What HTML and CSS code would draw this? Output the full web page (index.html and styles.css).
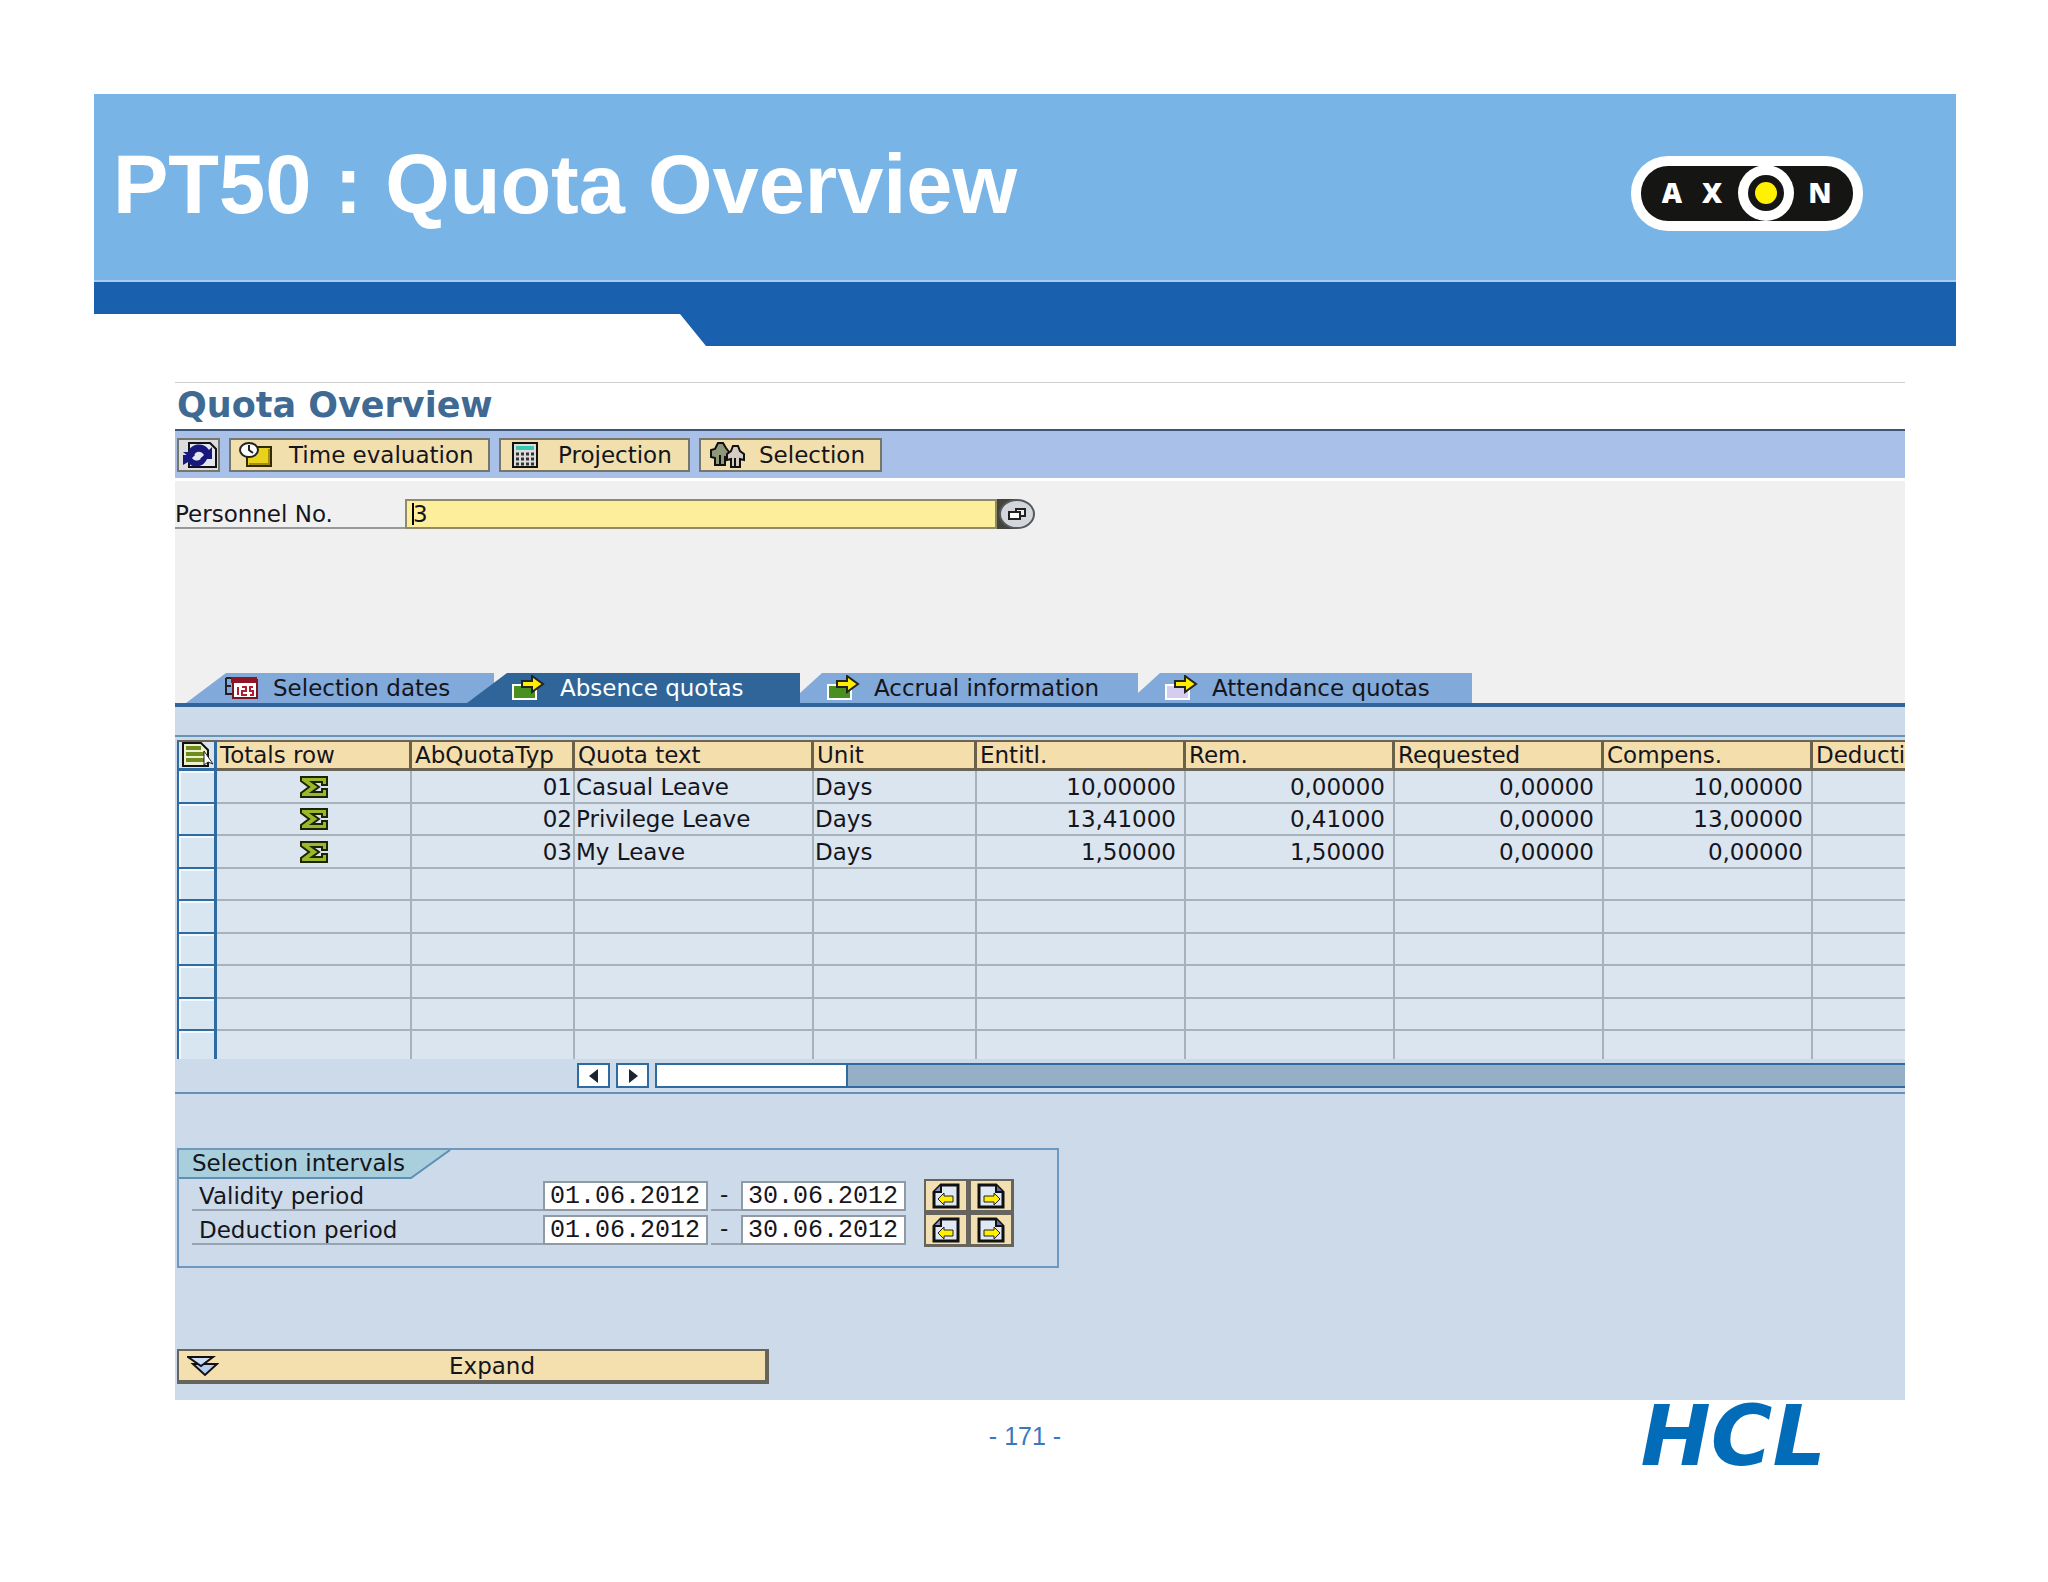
FILE: index.html
```html
<!DOCTYPE html>
<html lang="en">
<head>
    <meta charset="UTF-8">
    <meta name="viewport" content="width=device-width, initial-scale=1.0">
    <title>PT50 : Quota Overview</title>
    <link rel="stylesheet" href="styles.css">
</head>
<body>
    <!-- shared icons -->
    <svg class="sprite" aria-hidden="true">
        <symbol id="sigma" viewBox="0 0 28 22">
            <path d="M1 1H27V9H22V6H12L19 11L12 16H22V13H27V21H1V17L9 11L1 5Z" fill="#9ab82a" stroke="#1c2400" stroke-width="2"/>
        </symbol>
        <symbol id="page-prev" viewBox="0 0 28 26">
            <path d="M9 2H26V24H2V9Z" fill="#dfe8f5" stroke="#111" stroke-width="3"/>
            <path d="M2 9H9V2" fill="#8c90b4" stroke="#111" stroke-width="2"/>
            <path d="M6 16L12 10V13H21V19H12V22Z" fill="#ffee00" stroke="#222" stroke-width="1"/>
        </symbol>
        <symbol id="page-next" viewBox="0 0 28 26">
            <path d="M2 2H19L26 9V24H2Z" fill="#dfe8f5" stroke="#111" stroke-width="3"/>
            <path d="M19 2V9H26" fill="#6a6a96" stroke="#111" stroke-width="2"/>
            <path d="M23 16L17 10V13H7V19H17V22Z" fill="#ffee00" stroke="#222" stroke-width="1"/>
        </symbol>
        <symbol id="arrow-box" viewBox="0 0 34 26">
            <rect x="2" y="10" width="23" height="14" fill="currentColor" stroke="#fff" stroke-width="2"/>
            <path d="M11 6H21V1L32 9L21 17V12H11Z" fill="#ffee00" stroke="#222" stroke-width="2"/>
        </symbol>
    </svg>

    <div class="slide">
        <header class="banner">
            <h1>PT50 : Quota Overview</h1>
            <svg class="axon" viewBox="0 0 232 75" role="img" aria-label="Axon">
                <rect width="232" height="75" rx="37" fill="#fff"/>
                <rect x="10" y="10" width="212" height="55" rx="27" fill="#151514"/>
                <circle cx="135" cy="37" r="28" fill="#fff"/>
                <circle cx="135" cy="37" r="18" fill="#151514"/>
                <circle cx="135" cy="37" r="11" fill="#fff200"/>
                <g class="axon-text">
                    <text x="41" y="47">A</text>
                    <text x="81" y="47">X</text>
                    <text x="189" y="47">N</text>
                </g>
            </svg>
        </header>
        <div class="stripe"></div>

        <main class="sap">
            <h2>Quota Overview</h2>

            <div class="toolbar">
                <button class="refresh" aria-label="Refresh">
                    <svg width="36" height="26" viewBox="0 0 36 26">
                        <path d="M8 1H29L35 7V25H8Z" fill="#e4e6ee" stroke="#111" stroke-width="2"/>
                        <path d="M2 10H7C10 1 23 0 28 8L31 5V17H19L23 13C20 8 14 9 13 14H7Z" fill="#17177e"/>
                        <path d="M31 17H26C22 26 11 27 7 20L2 23V13H14L11 16C14 20 20 19 21 15Z" fill="#17177e"/>
                    </svg>
                </button>
                <button class="time">
                    <svg width="34" height="26" viewBox="0 0 34 26">
                        <rect x="8" y="5" width="24" height="19" fill="#e8d21c" stroke="#332b00" stroke-width="2"/>
                        <path d="M10 22H30V7" fill="none" stroke="#a88a10" stroke-width="2"/>
                        <ellipse cx="10" cy="8" rx="9" ry="7" fill="#fff" stroke="#222" stroke-width="2"/>
                        <path d="M10 3V8L14 11" fill="none" stroke="#222" stroke-width="2"/>
                    </svg>
                    Time evaluation
                </button>
                <button class="projection">
                    <svg width="26" height="26" viewBox="0 0 26 26">
                        <rect x="1" y="1" width="24" height="24" fill="#dcdcdc" stroke="#111" stroke-width="2"/>
                        <rect x="4" y="4" width="18" height="4" fill="#39c9ae"/>
                        <path d="M4 12H22M4 17H22M4 22H22" stroke="#333" stroke-width="3" stroke-dasharray="3 2"/>
                    </svg>
                    Projection
                </button>
                <button class="selection">
                    <svg width="36" height="26" viewBox="0 0 36 26">
                        <path d="M6 7L9 1H14L17 6L20 10V16L16 15V23H6V16L2 15V8Z" fill="#8f9878" stroke="#111" stroke-width="2"/>
                        <path d="M22 9L24 4H29L31 9L35 12V18L31 17V25H22V17L18 18V12Z" fill="#d5cdc4" stroke="#111" stroke-width="2"/>
                        <path d="M11 13V22M26 16V24" stroke="#111" stroke-width="2"/>
                    </svg>
                    Selection
                </button>
            </div>

            <div class="personnel">
                <label for="pernr">Personnel No.</label>
                <input id="pernr" type="text" value="3">
                <button class="match" aria-label="Search help">
                    <svg width="38" height="30" viewBox="0 0 38 30">
                        <rect width="20" height="30" fill="#45443c"/>
                        <ellipse cx="20" cy="15" rx="17" ry="14" fill="#d3d6da" stroke="#55585c" stroke-width="2"/>
                        <rect x="19" y="10" width="9" height="7" fill="#eee" stroke="#222" stroke-width="2"/>
                        <rect x="12" y="13" width="11" height="7" fill="#fff" stroke="#222" stroke-width="2"/>
                    </svg>
                </button>
            </div>

            <nav class="tabs">
                <button class="tab tab-dates">
                    <svg width="34" height="26" viewBox="0 0 34 26">
                        <path d="M2 3H9M2 3V19H9M2 11H7" fill="none" stroke="#222" stroke-width="2"/>
                        <rect x="9" y="5" width="24" height="18" fill="#fff" stroke="#7b1420" stroke-width="2"/>
                        <rect x="7" y="2" width="26" height="6" fill="#8e1524"/>
                        <path d="M14 12V20M18 12H22V16H18V20H23M29 12H26V16H29V20H26" fill="none" stroke="#b0202c" stroke-width="2"/>
                    </svg>
                    Selection dates
                </button>
                <button class="tab tab-absence">
                    <svg class="green" width="34" height="26"><use href="#arrow-box"/></svg>
                    Absence quotas
                </button>
                <button class="tab tab-accrual">
                    <svg class="green" width="34" height="26"><use href="#arrow-box"/></svg>
                    Accrual information
                </button>
                <button class="tab tab-attendance">
                    <svg class="lilac" width="34" height="26"><use href="#arrow-box"/></svg>
                    Attendance quotas
                </button>
            </nav>

            <div class="pane">
                <div class="table-box">
                    <table>
                        <colgroup>
                            <col class="c-sel"><col class="c-totals"><col class="c-typ"><col class="c-text"><col class="c-typ">
                            <col class="c-num"><col class="c-num"><col class="c-num"><col class="c-num"><col>
                        </colgroup>
                        <thead>
                            <tr>
                                <th class="sel" aria-label="Select all">
                                    <svg width="34" height="26" viewBox="0 0 34 26">
                                        <path d="M2 1H20L27 8V24H2Z" fill="#eef0d0" stroke="#111" stroke-width="2"/>
                                        <path d="M5 6H20M5 12H24M5 18H24" stroke="#6f8c1c" stroke-width="4"/>
                                        <path d="M23 9V23L27 20L32 22Z" fill="#fff" stroke="#222" stroke-width="1"/>
                                    </svg>
                                </th>
                                <th>Totals row</th>
                                <th>AbQuotaTyp</th>
                                <th>Quota text</th>
                                <th>Unit</th>
                                <th>Entitl.</th>
                                <th>Rem.</th>
                                <th>Requested</th>
                                <th>Compens.</th>
                                <th>Deducti</th>
                            </tr>
                        </thead>
                        <tbody>
                            <tr>
                                <td class="sel"></td>
                                <td class="sum"><svg width="28" height="22"><use href="#sigma"/></svg></td>
                                <td class="typ">01</td><td>Casual Leave</td><td>Days</td>
                                <td class="num">10,00000</td><td class="num">0,00000</td><td class="num">0,00000</td><td class="num">10,00000</td><td></td>
                            </tr>
                            <tr>
                                <td class="sel"></td>
                                <td class="sum"><svg width="28" height="22"><use href="#sigma"/></svg></td>
                                <td class="typ">02</td><td>Privilege Leave</td><td>Days</td>
                                <td class="num">13,41000</td><td class="num">0,41000</td><td class="num">0,00000</td><td class="num">13,00000</td><td></td>
                            </tr>
                            <tr>
                                <td class="sel"></td>
                                <td class="sum"><svg width="28" height="22"><use href="#sigma"/></svg></td>
                                <td class="typ">03</td><td>My Leave</td><td>Days</td>
                                <td class="num">1,50000</td><td class="num">1,50000</td><td class="num">0,00000</td><td class="num">0,00000</td><td></td>
                            </tr>
                            <tr><td class="sel"></td><td></td><td></td><td></td><td></td><td></td><td></td><td></td><td></td><td></td></tr>
                            <tr><td class="sel"></td><td></td><td></td><td></td><td></td><td></td><td></td><td></td><td></td><td></td></tr>
                            <tr><td class="sel"></td><td></td><td></td><td></td><td></td><td></td><td></td><td></td><td></td><td></td></tr>
                            <tr><td class="sel"></td><td></td><td></td><td></td><td></td><td></td><td></td><td></td><td></td><td></td></tr>
                            <tr><td class="sel"></td><td></td><td></td><td></td><td></td><td></td><td></td><td></td><td></td><td></td></tr>
                            <tr class="last"><td class="sel"></td><td></td><td></td><td></td><td></td><td></td><td></td><td></td><td></td><td></td></tr>
                        </tbody>
                    </table>
                    <div class="scroll">
                        <button aria-label="Scroll left"><svg width="12" height="14" viewBox="0 0 12 14"><path d="M10 0V14L1 7Z" fill="#1d2233"/></svg></button>
                        <button aria-label="Scroll right"><svg width="12" height="14" viewBox="0 0 12 14"><path d="M2 0V14L11 7Z" fill="#1d2233"/></svg></button>
                        <div class="track"><div class="thumb"></div></div>
                    </div>
                </div>

                <section class="intervals">
                    <h3>
                        <svg width="275" height="30" viewBox="0 0 275 30">
                            <path d="M0 0H271L232 28H0Z" fill="#aacfdc"/>
                            <path d="M271 0L232 28H0" fill="none" stroke="#5f8fb5" stroke-width="2"/>
                        </svg>
                        <span>Selection intervals</span>
                    </h3>
                    <div class="period">
                        <label for="valid-from">Validity period</label>
                        <input id="valid-from" type="text" value="01.06.2012">
                        <span class="dash">-</span>
                        <input type="text" value="30.06.2012" aria-label="Validity period to">
                        <div class="pager">
                            <button aria-label="Previous"><svg width="28" height="26"><use href="#page-prev"/></svg></button>
                            <button aria-label="Next"><svg width="28" height="26"><use href="#page-next"/></svg></button>
                        </div>
                    </div>
                    <div class="period">
                        <label for="deduct-from">Deduction period</label>
                        <input id="deduct-from" type="text" value="01.06.2012">
                        <span class="dash">-</span>
                        <input type="text" value="30.06.2012" aria-label="Deduction period to">
                        <div class="pager">
                            <button aria-label="Previous"><svg width="28" height="26"><use href="#page-prev"/></svg></button>
                            <button aria-label="Next"><svg width="28" height="26"><use href="#page-next"/></svg></button>
                        </div>
                    </div>
                </section>

                <button class="expand">
                    <svg width="32" height="22" viewBox="0 0 32 22">
                        <path d="M6 9H30L18 20Z" fill="#b5cdf2" stroke="#111" stroke-width="2"/>
                        <path d="M1 2H26L14 11Z" fill="#c9dcf8" stroke="#111" stroke-width="2"/>
                    </svg>
                    <span>Expand</span>
                </button>
            </div>
        </main>

        <footer>
            <span class="page-no">- 171 -</span>
            <span class="hcl">HCL</span>
        </footer>
    </div>
</body>
</html>
```

FILE: styles.css
```css
* {
    box-sizing: border-box;
}

body {
    margin: 0;
    background-color: #fff;
    font-family: "DejaVu Sans", Verdana, sans-serif;
    font-size: 23px;
    line-height: 28px;
    color: #15151c;
}

button, input {
    font: inherit;
    color: inherit;
    margin: 0;
    padding: 0;
    border: none;
    border-radius: 0;
}

svg {
    display: block;
    flex: none;
}

.sprite {
    position: absolute;
    width: 0;
    height: 0;
}

.slide {
    padding: 94px 92px 0 94px;
}

/* Banner */
.banner {
    display: flex;
    justify-content: space-between;
    align-items: flex-start;
    height: 188px;
    padding: 44px 93px 0 19px;
    background-color: #78b5e6;
    border-bottom: 2px solid #a9cdf2;
}

.banner h1 {
    margin: 0;
    font: bold 83px/94px "Liberation Sans", Arial, sans-serif;
    color: #fff;
}

.axon {
    width: 232px;
    height: 75px;
    margin-top: 18px;
}

.axon-text {
    font: 800 28px "Open Sans", sans-serif;
    fill: #fff;
    text-anchor: middle;
}

.stripe {
    height: 64px;
    background-color: #1960ae;
    clip-path: polygon(0 0, 100% 0, 100% 100%, 612px 100%, 586px 32px, 0 32px);
}

/* SAP window */
.sap {
    margin: 36px 51px 0 81px;
    border-top: 1px solid #cfcfcf;
    background-color: #f1f0f1;
    overflow: hidden;
}

.sap h2 {
    margin: 0;
    padding: 0 2px;
    height: 48px;
    font-size: 35px;
    line-height: 44px;
    color: #3f6a94;
    background-color: #fff;
    border-bottom: 2px solid #3a5576;
}

.toolbar {
    display: flex;
    align-items: center;
    gap: 9px;
    height: 50px;
    padding: 0 2px;
    background-color: #a9c1e8;
    border-bottom: 3px solid #fff;
}

.toolbar button {
    display: flex;
    align-items: center;
    height: 34px;
    padding-left: 8px;
    background-color: #f2dfae;
    border: 2px solid #77766a;
    white-space: nowrap;
}

.toolbar .refresh {
    width: 43px;
    padding-left: 2px;
    background-color: #dcdce0;
}

.toolbar .time {
    width: 261px;
    gap: 16px;
}

.toolbar .projection {
    width: 191px;
    padding-left: 11px;
    gap: 20px;
}

.toolbar .selection {
    width: 183px;
    gap: 14px;
}

.personnel {
    display: flex;
    height: 192px;
    padding-top: 18px;
}

.personnel label {
    width: 230px;
    height: 30px;
    line-height: 30px;
    border-bottom: 2px solid #98989a;
}

/* the dark bar is the text cursor */
.personnel input {
    width: 592px;
    height: 30px;
    padding-left: 6px;
    border: 2px solid #8f8a68;
    background: linear-gradient(#000, #000) 5px 2px / 2px 22px no-repeat, #fdee9c;
}

.match {
    width: 38px;
    height: 30px;
    background: none;
}

/* Tabs */
.tabs {
    display: flex;
    height: 34px;
    padding-left: 11px;
    border-bottom: 4px solid #2f6598;
}

.tab {
    display: flex;
    align-items: center;
    height: 30px;
    background-color: #81a9d9;
    white-space: nowrap;
}

.tab-dates {
    width: 308px;
    padding-left: 38px;
    gap: 15px;
    clip-path: polygon(40px 0, 100% 0, 100% 100%, 0 100%);
}

.tab-absence {
    width: 333px;
    margin-left: -27px;
    padding-left: 44px;
    gap: 15px;
    color: #fff;
    background-color: #2f6598;
    clip-path: polygon(40px 0, 100% 0, 100% 100%, 0 100%);
}

.tab-accrual, .tab-attendance {
    width: 338px;
    padding-left: 26px;
    gap: 14px;
    clip-path: polygon(22px 0, 100% 0, 100% 100%, 0 100%, 0 20px);
}

.tab-attendance {
    width: 334px;
}

.green {
    color: #4a9020;
}

.lilac {
    color: #d5cdee;
}

/* Tab content */
.pane {
    padding: 28px 0 16px;
    background-color: #ccdae9;
}

.table-box {
    padding: 3px 0 4px 2px;
    border-top: 2px solid #6a93b8;
    border-bottom: 2px solid #6a8fb4;
}

table {
    width: 100%;
    table-layout: fixed;
    border-spacing: 0;
    background-color: #dbe5f0;
}

.c-sel { width: 40px; }
.c-totals { width: 195px; }
.c-typ { width: 163px; }
.c-text { width: 239px; }
.c-num { width: 209px; }

th {
    height: 31px;
    padding: 0 3px;
    font-weight: normal;
    line-height: 26px;
    text-align: left;
    background-color: #f4deac;
    border-top: 2px solid #6b6455;
    border-right: 3px solid #6b6048;
    border-bottom: 3px solid #6b6455;
    white-space: nowrap;
    overflow: hidden;
}

td {
    height: 32px;
    padding: 0 1px;
    line-height: 30px;
    border-right: 2px solid #a8b2bb;
    border-bottom: 2px solid #a8b2bb;
    white-space: nowrap;
}

tbody tr:nth-child(odd) td {
    height: 33px;
}

tbody tr.last td {
    height: 28px;
    border-bottom: none;
}

th:last-child, td:last-child {
    border-right: none;
}

.sel {
    padding: 0 2px;
    background-color: #d8e6f2;
    border-left: 2px solid #2f6ba0;
    border-right: 3px solid #2f6ba0;
    border-bottom-color: #2f6ba0;
}

td.sel {
    box-shadow: inset 2px 2px #f2f8fd;
}

.sum svg {
    margin: 0 auto;
}

.typ, .num {
    text-align: right;
}

.num {
    padding-right: 8px;
}

.scroll {
    display: flex;
    gap: 6px;
    padding: 4px 0 0 400px;
}

.scroll button {
    display: flex;
    align-items: center;
    justify-content: center;
    width: 33px;
    height: 25px;
    background-color: #fff;
    border: 2px solid #2f6ba0;
}

.track {
    flex: 1;
    height: 25px;
    background-color: #95afc7;
    border: 2px solid #2f6ba0;
    border-right: none;
}

.thumb {
    width: 191px;
    height: 21px;
    background-color: #fff;
    border-right: 2px solid #2f6ba0;
}

/* Selection intervals */
.intervals {
    width: 882px;
    height: 120px;
    margin: 54px 0 0 2px;
    border: 2px solid #6f98bf;
}

.intervals h3 {
    display: grid;
    margin: 0;
    height: 29px;
    font-size: 23px;
    font-weight: normal;
    line-height: 26px;
}

.intervals h3 svg, .intervals h3 span {
    grid-area: 1 / 1;
}

.intervals h3 span {
    padding-left: 13px;
}

.period {
    display: flex;
    align-items: center;
    height: 34px;
    padding-left: 13px;
}

.period label {
    width: 351px;
    height: 30px;
    padding-left: 7px;
    line-height: 30px;
    border-bottom: 2px solid #98a3b0;
}

.period input {
    width: 165px;
    height: 30px;
    padding-left: 5px;
    font: 25px "Liberation Mono", monospace;
    background-color: #fff;
    border: 2px solid #8f9aa5;
}

.dash {
    width: 30px;
    height: 30px;
    margin-left: 3px;
    padding-left: 9px;
    line-height: 26px;
    border-bottom: 2px solid #98a3b0;
}

.pager {
    display: flex;
    margin-left: 18px;
}

.pager button {
    display: flex;
    align-items: center;
    justify-content: center;
    width: 45px;
    height: 34px;
    background-color: #f2e0b2;
    border: 2px solid #66645c;
    border-right-width: 3px;
    border-bottom-width: 3px;
}

.expand {
    display: flex;
    align-items: center;
    width: 592px;
    height: 35px;
    margin: 81px 0 0 2px;
    padding-left: 8px;
    background-color: #f3e0ae;
    border: 2px solid #66645c;
    border-right-width: 4px;
    border-bottom-width: 4px;
}

.expand span {
    flex: 1;
}

/* Footer */
footer {
    display: grid;
    grid-template-columns: 1fr auto 1fr;
    align-items: center;
    height: 72px;
}

.page-no {
    grid-column: 2;
    font: 25px/30px "Liberation Sans", Arial, sans-serif;
    color: #3a78bd;
}

.hcl {
    justify-self: end;
    padding-right: 130px;
    font: italic bold 84px/72px "DejaVu Sans", sans-serif;
    color: #036cb8;
}
```
